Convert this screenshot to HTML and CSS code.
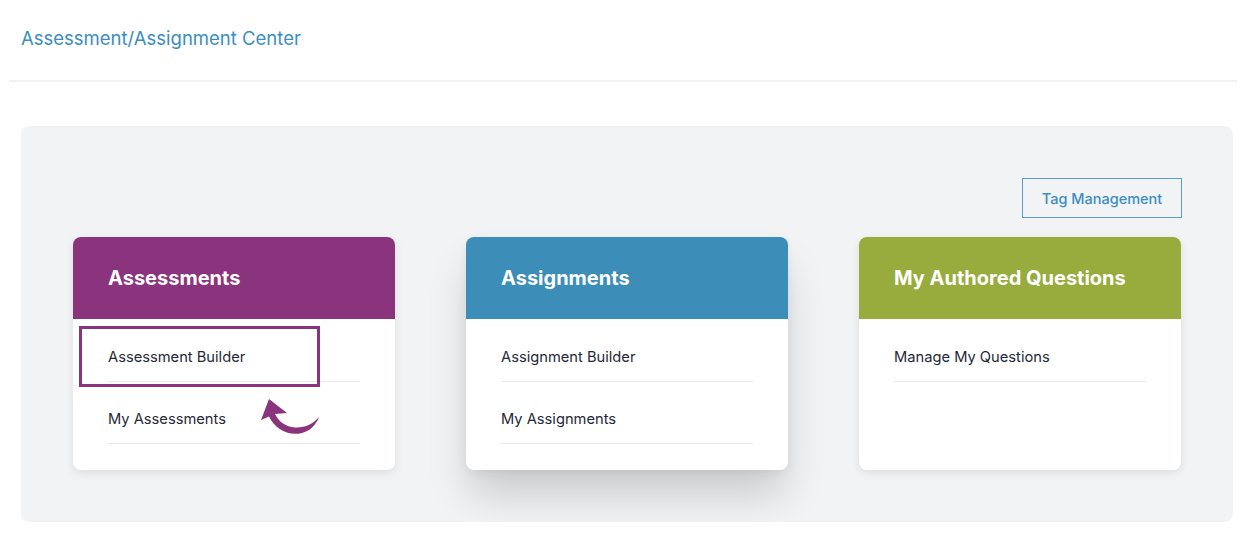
FILE: index.html
```html
<!DOCTYPE html>
<html lang="en">
<head>
<meta charset="utf-8">
<title>Assessment/Assignment Center</title>
<link rel="stylesheet" href="styles.css">
</head>
<body>
<div class="page">
  <header class="top">
    <h1 class="title">Assessment/Assignment Center</h1>
  </header>
  <main class="panel">
    <div class="toolbar">
      <button class="tag-btn" type="button">Tag Management</button>
    </div>
    <div class="cards">
      <section class="card">
        <div class="card-head head-purple">Assessments</div>
        <ul class="card-list">
          <li class="item">Assessment Builder</li>
          <li class="item">My Assessments</li>
        </ul>
        <div class="highlight"></div>
        <svg class="arrow" viewBox="0 0 64 42" width="64" height="42" aria-hidden="true">
          <path d="M10 2 L2 23 L10 19.5 C16 32 29 39.5 43 36 C51 34 57 28 60 20 C54 27 46 31 36 30.5 C27 30 20 25 16 17 L28 16 Z" fill="#8a347d"/>
        </svg>
      </section>
      <section class="card card-raised">
        <div class="card-head head-blue">Assignments</div>
        <ul class="card-list">
          <li class="item">Assignment Builder</li>
          <li class="item">My Assignments</li>
        </ul>
      </section>
      <section class="card">
        <div class="card-head head-green">My Authored Questions</div>
        <ul class="card-list">
          <li class="item">Manage My Questions</li>
        </ul>
      </section>
    </div>
  </main>
</div>
</body>
</html>
```

FILE: styles.css
```css
* { box-sizing: border-box; }

body {
  margin: 0;
  background: #ffffff;
  font-family: Inter, "Noto Sans", "Liberation Sans", sans-serif;
}

.page {
  padding: 0 19px 0 9px;
}

.top {
  height: 82px;
  display: flex;
  align-items: center;
  padding-left: 12px;
  border-bottom: 2px solid #f0f1f2;
}

.title {
  margin: 0 0 4px 0;
  font-size: 18.5px;
  font-weight: 400;
  color: #3b8ec0;
}

.panel {
  margin: 44px 4px 0 12px;
  background: #f2f3f5;
  border-radius: 8px;
  padding: 52px 52px 52px 52px;
}

.toolbar {
  display: flex;
  justify-content: flex-end;
  margin-bottom: 19px;
}

.tag-btn {
  width: 160px;
  height: 40px;
  background: transparent;
  border: 1px solid #5b9fc9;
  color: #3b8ec0;
  font-family: inherit;
  font-size: 14.5px;
  font-weight: 500;
  padding: 0;
  margin-right: -1px;
}

.cards {
  display: grid;
  grid-template-columns: repeat(3, 322px);
  column-gap: 71px;
}

.card {
  position: relative;
  background: #ffffff;
  border-radius: 8px;
  height: 233px;
  box-shadow: 0 3px 10px rgba(0, 0, 0, 0.09);
}

.card-raised {
  box-shadow: 0 28px 42px -4px rgba(0, 0, 0, 0.17), 0 3px 10px rgba(0, 0, 0, 0.06);
}

.card-head {
  height: 82px;
  display: flex;
  align-items: center;
  padding-left: 35px;
  color: #ffffff;
  font-size: 20px;
  font-weight: 700;
  border-radius: 8px 8px 0 0;
}

.head-purple { background: #8a347d; }
.head-blue { background: #3c8db8; }
.head-green { background: #97ac3c; }

.card-list {
  list-style: none;
  margin: 0;
  padding: 1px 35px 0;
}

.item {
  padding: 27px 0 14px;
  font-size: 14.7px;
  line-height: 20px;
  color: #1f2937;
  border-bottom: 1px solid #e6e8eb;
}

.highlight {
  position: absolute;
  left: 6px;
  top: 89px;
  width: 241px;
  height: 61px;
  border: 3px solid #8a347d;
}

.arrow {
  position: absolute;
  left: 186px;
  top: 160px;
}
```
